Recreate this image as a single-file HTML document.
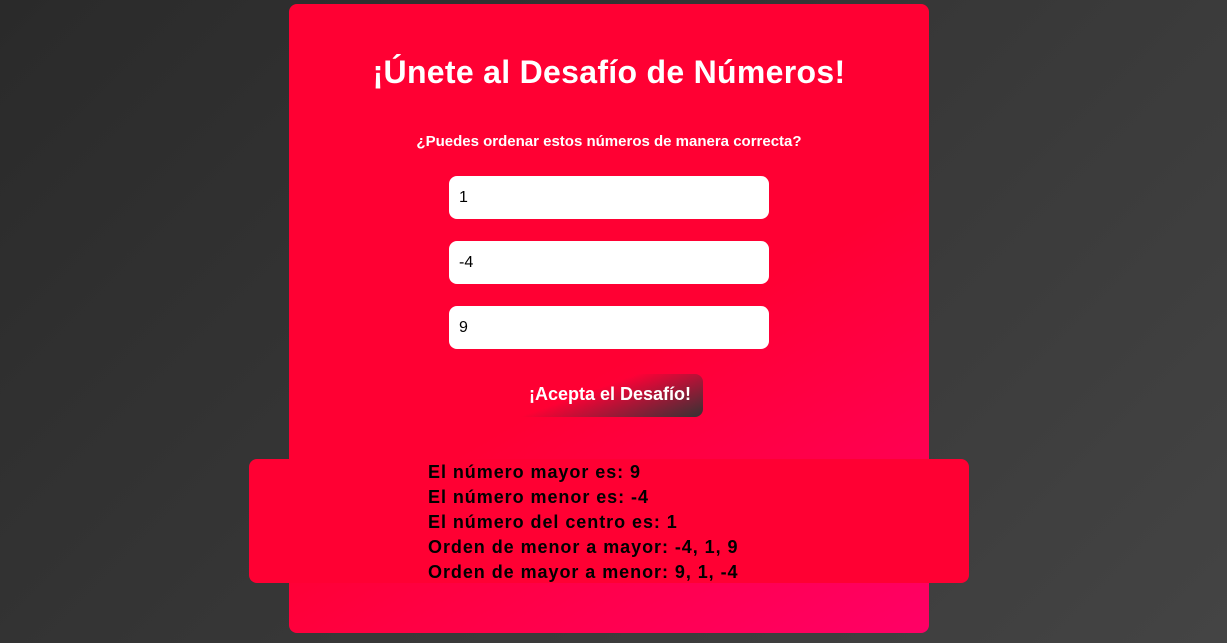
<!DOCTYPE html>
<html><head><style>
*{box-sizing:border-box;margin:0;padding:0}
body{width:1227px;height:643px;overflow:hidden;background:linear-gradient(135deg,#2a2a2a,#444);font-family:"Comic Sans MS","Liberation Sans",sans-serif;position:relative}
.card{position:absolute;left:289px;top:4px;width:640px;height:629px;border-radius:8px;background:linear-gradient(150deg,#ff0033 0%,#ff0033 55%,#ff0066 100%)}
h1{position:absolute;top:50px;left:0;width:100%;text-align:center;color:#fff;font-size:32px;font-weight:bold;letter-spacing:0.3px}
.sub{position:absolute;top:129px;left:0;width:100%;text-align:center;color:#fff;font-size:15px;font-weight:bold}
.in{position:absolute;left:160px;width:320px;height:43px;background:#fff;border-radius:8px;font-size:16px;padding:13px 10px;color:#000}
.btn{position:absolute;left:226px;top:370px;width:188px;height:43px;border-radius:8px;background:linear-gradient(160deg,rgba(255,0,51,0) 40%,#333 100%);color:#fff;font-size:18px;font-weight:bold;text-align:right;padding:10px 12px 0 0}
.res{position:absolute;left:249px;top:459px;width:720px;height:124px;border-radius:8px;background:#ff0033}
.res div{position:absolute;left:179px;font-size:18px;font-weight:bold;color:#000;line-height:25px;top:1px;letter-spacing:0.95px}
</style></head><body>
<div class="card">
<h1>¡Únete al Desafío de Números!</h1>
<div class="sub">¿Puedes ordenar estos números de manera correcta?</div>
<div class="in" style="top:172px">1</div>
<div class="in" style="top:237px">-4</div>
<div class="in" style="top:302px">9</div>
<div class="btn">¡Acepta el Desafío!</div>
</div>
<div class="res"><div>El número mayor es: 9<br>El número menor es: -4<br>El número del centro es: 1<br>Orden de menor a mayor: -4, 1, 9<br>Orden de mayor a menor: 9, 1, -4</div></div>
</body></html>
